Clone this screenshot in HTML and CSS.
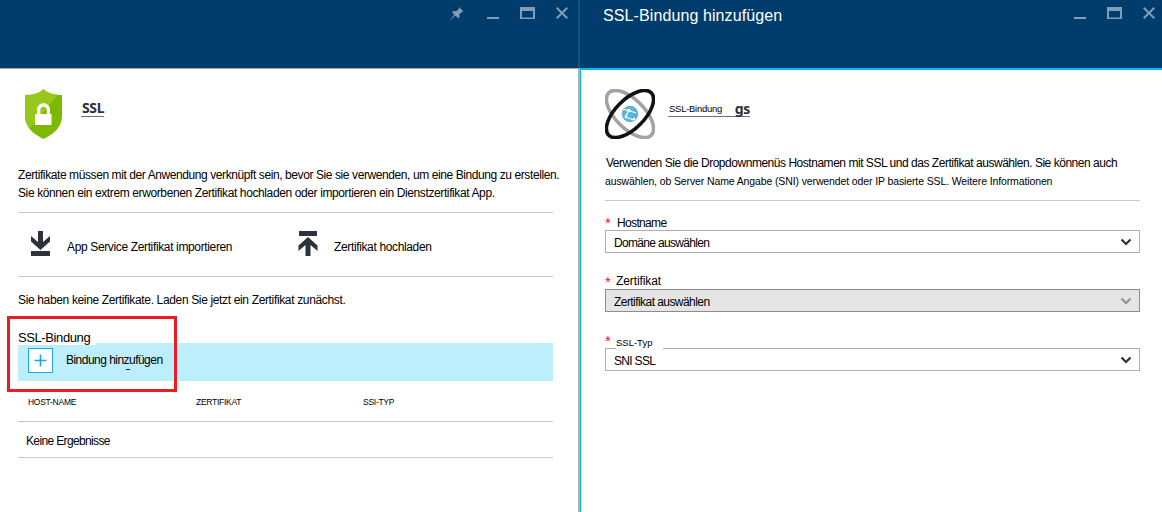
FILE: index.html
```html
<!DOCTYPE html>
<html lang="de">
<head>
<meta charset="utf-8">
<title>SSL-Bindung hinzufügen</title>
<link rel="stylesheet" href="styles.css">
</head>
<body>
<main class="portal">
  <section class="blade blade-ssl">
    <header class="bar">
      <div class="controls">
        <svg class="pin" width="14" height="14" viewBox="0 0 14 14"><path d="M9 0l4.500 4.500-1.700.4-2.500 2.600.2 3.200L8 11 5.400 8.500 0 13.500 4.300 7.500 2 5.200l1-1.100 3.200.1L9 1.800z"/></svg>
        <svg class="min" width="12" height="12" viewBox="0 0 12 12"><path d="M0 10h12v2H0z"/></svg>
        <svg class="max" width="15" height="12" viewBox="0 0 15 12"><path fill-rule="evenodd" d="M0 0h15v12H0zM2 4v6.500h11V4z"/></svg>
        <svg class="close" width="12" height="12" viewBox="0 0 12 12"><path d="M.7.700l10.600 10.600M11.300.700L.7 11.300"/></svg>
      </div>
    </header>
    <div class="content">
      <div class="heading">
        <svg class="shield" width="38" height="50" viewBox="0 0 38 50">
          <path fill="#7db900" d="M18.500 0C14 5 7 6 0 6v21c0 11 8 18 18.500 23C29 45 37 38 37 27V6C30 6 23 5 18.500 0z"/>
          <path fill="#96c71c" d="M18.500 0C14 5 7 6 0 6v21c0 5 2 9 5 12.500L33 5.700C27 5 22 4 18.500 0z"/>
          <path fill="#fff" fill-rule="evenodd" d="M10 25h2v-4c0-9 13-9 13 0v4h1.500v11H10zM15.300 25h6.500v-4c0-4.500-6.500-4.500-6.500 0z"/>
        </svg>
        <h1 class="name">SSL</h1>
      </div>
      <div class="intro">
        <p class="intro-a">Zertifikate müssen mit der Anwendung verknüpft sein, bevor Sie sie verwenden, um eine Bindung zu erstellen.</p>
        <p class="intro-b">Sie können ein extrem erworbenen Zertifikat hochladen oder importieren ein Dienstzertifikat App.</p>
      </div>
      <div class="commands">
        <div class="command import">
          <svg width="20" height="26" viewBox="0 0 20 26"><path d="M7 0h5v11l7-6v5.500L9.500 19 0 10.500V5l7 6zM0 20h19v5H0z"/></svg>
          <span>App Service Zertifikat importieren</span>
        </div>
        <div class="command upload">
          <svg width="20" height="26" viewBox="0 0 20 26"><path d="M1 0h18v5H1zM10 6l9.500 8.500V20l-7-6v11h-5V14l-7 6v-5.500z"/></svg>
          <span>Zertifikat hochladen</span>
        </div>
      </div>
      <p class="empty-note">Sie haben keine Zertifikate. Laden Sie jetzt ein Zertifikat zunächst.</p>
      <div class="bindings">
        <h2 class="bindings-title">SSL-Bindung</h2>
        <div class="add">
          <svg class="plus" width="25" height="25" viewBox="0 0 25 25"><rect x=".5" y=".5" width="24" height="24"/><path d="M6.500 12.500h12M12.500 6.500v12"/></svg>
          <span class="add-label">Bindung hinzufügen</span>
        </div>
        <div class="callout"></div>
      </div>
      <div class="row head"><span class="c1">HOST-NAME</span><span class="c2">ZERTIFIKAT</span><span class="c3">SSI-TYP</span></div>
      <div class="row body-row"><span>Keine Ergebnisse</span></div>
    </div>
  </section>
  <section class="blade blade-add">
    <header class="bar">
      <h1 class="bar-title">SSL-Bindung hinzufügen</h1>
      <div class="controls">
        <svg class="min" width="12" height="12" viewBox="0 0 12 12"><path d="M0 10h12v2H0z"/></svg>
        <svg class="max" width="15" height="12" viewBox="0 0 15 12"><path fill-rule="evenodd" d="M0 0h15v12H0zM2 4v6.500h11V4z"/></svg>
        <svg class="close" width="12" height="12" viewBox="0 0 12 12"><path d="M.7.700l10.600 10.600M11.300.700L.7 11.300"/></svg>
      </div>
    </header>
    <div class="content">
      <div class="heading">
        <svg class="atom" width="50" height="50" viewBox="0 0 50 50">
          <ellipse cx="25" cy="25" rx="30" ry="14.500" transform="rotate(45 25 25)" fill="none" stroke="#a3a3a3" stroke-width="3.600"/>
          <circle cx="25" cy="25" r="8.200" fill="#59b4d9"/>
          <path d="M18.500 20.500l5.500 1 7 2.500M24 21l-3.500 7 8 3" fill="none" stroke="#fff" stroke-width="1.200"/>
          <circle cx="24" cy="21.500" r="1.800" fill="#fff"/><circle cx="21" cy="28" r="1.400" fill="#fff"/><circle cx="29" cy="30" r="1.300" fill="#fff"/>
          <ellipse cx="25" cy="25" rx="30" ry="14.500" transform="rotate(-45 25 25)" fill="none" stroke="#111" stroke-width="3.600"/>
        </svg>
        <div class="resource"><span class="kind">SSL-Bindung</span><span class="id">gs</span></div>
      </div>
      <div class="intro">
        <p class="intro-c">Verwenden Sie die Dropdownmenüs Hostnamen mit SSL und das Zertifikat auswählen. Sie können auch</p>
        <p class="intro-d">auswählen, ob Server Name Angabe (SNI) verwendet oder IP basierte SSL. Weitere Informationen</p>
      </div>
      <div class="field host">
        <div class="label"><b>*</b><span>Hostname</span></div>
        <div class="select"><span>Domäne auswählen</span><svg width="12" height="8" viewBox="0 0 12 8"><path d="M1.500 1.500L6 6l4.500-4.500"/></svg></div>
      </div>
      <div class="field cert">
        <div class="label"><b>*</b><span>Zertifikat</span></div>
        <div class="select disabled"><span>Zertifikat auswählen</span><svg width="12" height="8" viewBox="0 0 12 8"><path d="M1.500 1.500L6 6l4.500-4.500"/></svg></div>
      </div>
      <div class="field type">
        <div class="label"><b>*</b><span>SSL-Typ</span></div>
        <div class="select"><span>SNI SSL</span><svg width="12" height="8" viewBox="0 0 12 8"><path d="M1.500 1.500L6 6l4.500-4.500"/></svg></div>
      </div>
    </div>
  </section>
</main>
</body>
</html>
```
FILE: styles.css
```css
* { box-sizing: border-box; }
body, h1, h2, p { margin: 0; font-weight: normal; }
body { font: 12px/18px "Liberation Sans", Arial, sans-serif; color: #000; background: #fff; overflow: hidden; }
svg { display: block; flex: none; }
p, span, h1, h2 { white-space: nowrap; }

.portal { display: grid; grid-template-columns: 580px 582px; height: 512px; }
.blade { display: flex; flex-direction: column; }
.bar { display: flex; height: 68px; background: #003c6c; }
.controls { display: flex; margin-left: auto; padding-top: 7px; fill: #7f9db5; }
.controls .close { stroke: #7f9db5; stroke-width: 2; fill: none; }
.min { margin-right: 21px; }
.max { margin-right: 21px; }
.pin { margin-right: 23px; }
.content { flex: 1; }
.blade-ssl .bar { border-right: 2px solid #1a4f7a; }
.blade-ssl .controls { padding-right: 10px; }
.blade-ssl .content { border-top: 1px solid #a6a6a6; border-right: 2px solid #b0b0b0; padding: 20px 18px 0 18px; }
.blade-ssl .content > * { width: 535px; }
.blade-add .controls { padding-right: 7px; }
.blade-add .content { border-top: 2px solid #00bcf2; border-left: 1px solid #00bcf2; padding: 19px 22px 0 24px; }
.bar-title { margin: 7px 0 0 23px; color: #fff; font-size: 16px; line-height: 18px; letter-spacing: .1px; }

.heading { display: flex; height: 50px; }
.shield { margin-left: 7px; }
.name { margin: 11px 0 0 18px; width: 23px; height: 17px; padding-left: 1px; border-bottom: 1px solid #6f7079; font: bold 14px/15px "Noto Sans", sans-serif; color: #2b2f3b; letter-spacing: -.4px; }
.resource { display: flex; margin: 11px 0 0 13px; height: 17px; width: 82px; border-bottom: 1px solid #6f7079; }
.kind { padding-left: 1px; font-size: 9.5px; line-height: 17px; width: 67px; letter-spacing: -.27px; }
.id { font: bold 14px/17px "Noto Sans", sans-serif; color: #2b2f3b; letter-spacing: -.3px; }

.blade-ssl .intro { padding: 27px 0 10px; border-bottom: 1px solid #c8c8c8; }
.intro-a { letter-spacing: -.41px; }
.intro-b { letter-spacing: -.385px; }
.commands { display: flex; height: 64px; border-bottom: 1px solid #c8c8c8; padding-top: 18px; }
.command { display: flex; fill: #2d333a; }
.command span { padding-top: 7px; letter-spacing: -.36px; }
.import { width: 268px; padding-left: 13px; gap: 16px; }
.upload { padding-left: 12px; gap: 16px; }
.empty-note { margin-top: 14px; letter-spacing: -.35px; }
.bindings { position: relative; margin-top: 19px; height: 53px; }
.bindings-title { position: relative; width: 78px; height: 17px; background: #fff; font-size: 13px; line-height: 19px; letter-spacing: -.4px; }
.add { display: flex; height: 38px; margin-top: -2px; background: #bdeefb; padding: 5px 0 0 10px; gap: 13px; }
.plus rect { fill: #fff; stroke: #1ba6ee; }
.plus path { stroke: #1ba6ee; stroke-width: 1.600; }
.add-label { position: relative; padding-top: 3px; letter-spacing: -.53px; }
.add-label::after { content: ""; position: absolute; left: 60px; top: 21px; width: 4px; height: 1px; background: #222; }
.callout { position: absolute; left: -11px; top: -12px; width: 170px; height: 76px; border: 3px solid #ed1c24; }
.row { display: flex; border-bottom: 1px solid #c8c8c8; }
.head { height: 41px; padding: 12px 0 0 10px; font-size: 8.500px; letter-spacing: -.27px; }
.c1 { width: 168px; }
.c2 { width: 167px; }
.body-row { height: 36px; padding: 10px 0 0 8px; letter-spacing: -.64px; }

.blade-add .intro { padding: 15px 0 10px; border-bottom: 1px solid #c8c8c8; }
.intro-c { padding-left: 1px; letter-spacing: -.47px; }
.intro-d { font-size: 10.500px; letter-spacing: -.12px; }
.field { display: flex; flex-direction: column; }
.host { margin-top: 13px; }
.cert { margin-top: 20px; }
.type { margin-top: 20px; }
.label { display: flex; height: 16px; }
.label b { width: 11px; color: #e8172c; font: 15px/18px "Liberation Sans", Arial, sans-serif; }
.host .label span { padding-left: 1px; letter-spacing: -.65px; }
.cert .label span { margin-top: -1px; letter-spacing: -.1px; }
.type .label b { line-height: 17px; }
.type .label span { position: relative; margin-top: 1px; width: 47px; height: 18px; background: #fff; font-size: 9.500px; line-height: 20px; }
.select { display: flex; height: 23px; border: 1px solid #b0b0b0; padding: 3px 8px 0; justify-content: space-between; letter-spacing: -.68px; }
.select svg { margin: 4px -1px 0 0; fill: none; stroke: #2b2f3b; stroke-width: 2.200; }
.disabled { background: #e5e5e5; border-color: #8c8c8c; letter-spacing: -.56px; }
.disabled svg { stroke: #929292; }
```
